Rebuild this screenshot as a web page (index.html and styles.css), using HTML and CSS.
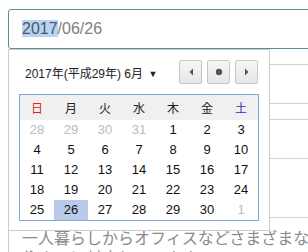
FILE: index.html
```html
<!DOCTYPE html>
<html lang="ja">
<head>
    <meta charset="UTF-8">
    <meta name="viewport" content="width=device-width, initial-scale=1.0">
    <title>日付選択</title>
    <link rel="stylesheet" href="styles.css">
</head>
<body>

    <div class="page">
        <!-- date input -->
        <div class="date-input"><span class="sel">2017</span>/06/26</div>

        <!-- form rows behind the picker -->
        <div class="rows">
            <div class="row r1"></div>
            <div class="row r2"></div>
            <div class="row r3"></div>
            <div class="row r4"></div>
            <div class="row r5"></div>
            <div class="row note">一人暮らしからオフィスなどさまざまな住まいに対応しています</div>
        </div>

        <!-- date picker popup -->
        <div class="picker">
            <div class="picker-head">
                <span class="month-label">2017年(平成29年) 6月 <span class="caret">&#9660;</span></span>
                <div class="nav">
                    <button class="nav-btn">
                        <svg width="6" height="8" viewBox="0 0 6 8"><path d="M5 0.5 L1.5 4 L5 7.5 Z" fill="#555"/></svg>
                    </button>
                    <button class="nav-btn">
                        <svg width="8" height="8" viewBox="0 0 8 8"><circle cx="4" cy="4" r="3.2" fill="#555"/></svg>
                    </button>
                    <button class="nav-btn">
                        <svg width="6" height="8" viewBox="0 0 6 8"><path d="M1 0.5 L4.5 4 L1 7.5 Z" fill="#555"/></svg>
                    </button>
                </div>
            </div>

            <div class="cal">
                <div class="wd sun">日</div>
                <div class="wd">月</div>
                <div class="wd">火</div>
                <div class="wd">水</div>
                <div class="wd">木</div>
                <div class="wd">金</div>
                <div class="wd sat">土</div>

                <div class="day other">28</div>
                <div class="day other">29</div>
                <div class="day other">30</div>
                <div class="day other">31</div>
                <div class="day">1</div>
                <div class="day">2</div>
                <div class="day">3</div>

                <div class="day">4</div>
                <div class="day">5</div>
                <div class="day">6</div>
                <div class="day">7</div>
                <div class="day">8</div>
                <div class="day">9</div>
                <div class="day">10</div>

                <div class="day">11</div>
                <div class="day">12</div>
                <div class="day">13</div>
                <div class="day">14</div>
                <div class="day">15</div>
                <div class="day">16</div>
                <div class="day">17</div>

                <div class="day">18</div>
                <div class="day">19</div>
                <div class="day">20</div>
                <div class="day">21</div>
                <div class="day">22</div>
                <div class="day">23</div>
                <div class="day">24</div>

                <div class="day">25</div>
                <div class="day selected">26</div>
                <div class="day">27</div>
                <div class="day">28</div>
                <div class="day">29</div>
                <div class="day">30</div>
                <div class="day other">1</div>
            </div>
        </div>
    </div>

</body>
</html>
```

FILE: styles.css
```css
body {
    margin: 0;
    font-family: "Liberation Sans", "Noto Sans CJK JP", sans-serif;
    background: white;
    overflow: hidden;
}

.page {
    position: relative;
    padding-top: 9px;
}

/* Date input */
.date-input {
    margin-left: 8px;
    width: 340px;
    height: 40px;
    box-sizing: border-box;
    border: 1px solid #5d8ea0;
    border-radius: 3px;
    padding: 9px 13px 0 13px;
    font-size: 16px;
    line-height: 20px;
    color: #808080;
}

.sel {
    background-color: #b5d3f7;
    color: #555;
}

/* Rows behind */
.rows {
    margin-left: 8px;
    width: 320px;
    border-left: 1px solid #ccc;
}

.row {
    border-bottom: 1px solid #d2d2d2;
}

.r1 { height: 15px; }
.r2 { height: 38px; }
.r3 { height: 15px; }
.r4 { height: 38px; }
.r5 { height: 58px; }

.note {
    border-bottom: none;
    width: 288px;
    padding: 9px 0 0 13px;
    font-family: "Noto Sans CJK JP", sans-serif;
    font-size: 16px;
    line-height: 20px;
    color: #8a8a8a;
}

/* Picker popup */
.picker {
    position: absolute;
    left: 8px;
    top: 49px;
    width: 262px;
    height: 182px;
    box-sizing: border-box;
    background: white;
    border: 1px solid #ccc;
    padding: 10px 10px 0 10px;
}

.picker-head {
    display: flex;
    justify-content: space-between;
    align-items: center;
    height: 24px;
    margin-bottom: 10px;
}

.month-label {
    padding-left: 6px;
    font-size: 12px;
    color: #222;
}

.caret {
    font-size: 9px;
    margin-left: 2px;
    vertical-align: 1px;
}

.nav {
    display: flex;
    gap: 5px;
    margin-right: 1px;
}

.nav-btn {
    width: 23px;
    height: 24px;
    padding: 0;
    border: 1px solid #c6c6c6;
    border-radius: 2px;
    background: linear-gradient(#f6f6f6, #e6e6e6);
    display: flex;
    align-items: center;
    justify-content: center;
}

/* Calendar grid */
.cal {
    display: grid;
    grid-template-columns: repeat(7, 34px);
    grid-template-rows: 25px repeat(5, 20px);
    width: 240px;
    box-sizing: border-box;
    border: 1px solid #86a6d9;
}

.wd {
    line-height: 25px;
    background-color: #f0f0f0;
    text-align: center;
    font-family: "Noto Sans CJK JP", sans-serif;
    font-size: 12px;
    color: #222;
}

.wd.sun { color: #e02020; }
.wd.sat { color: #3030c8; }

.day {
    text-align: center;
    line-height: 20px;
    font-size: 13px;
    color: #111;
}

.day.other { color: #bbb; }

.day.selected { background-color: #b9cbe9; }
```
